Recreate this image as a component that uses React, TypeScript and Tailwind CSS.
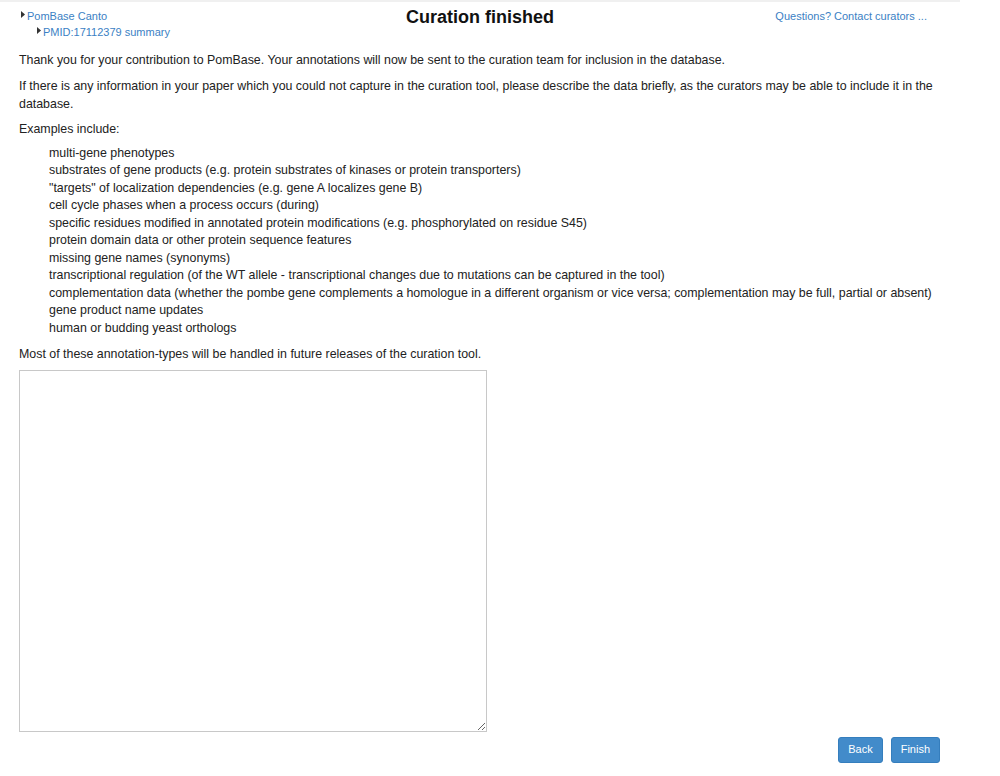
import React from "react";

const examples = [
  "multi-gene phenotypes",
  "substrates of gene products (e.g. protein substrates of kinases or protein transporters)",
  "\"targets\" of localization dependencies (e.g. gene A localizes gene B)",
  "cell cycle phases when a process occurs (during)",
  "specific residues modified in annotated protein modifications (e.g. phosphorylated on residue S45)",
  "protein domain data or other protein sequence features",
  "missing gene names (synonyms)",
  "transcriptional regulation (of the WT allele - transcriptional changes due to mutations can be captured in the tool)",
  "complementation data (whether the pombe gene complements a homologue in a different organism or vice versa; complementation may be full, partial or absent)",
  "gene product name updates",
  "human or budding yeast orthologs",
];

const Caret = () => (
  <svg width="4" height="7" viewBox="0 0 4 7" className="mr-[2px] mt-[-4px] shrink-0">
    <path d="M0 0 L4 3.5 L0 7 Z" fill="#333" />
  </svg>
);

const Header = () => {
  return (
    <div className="relative w-[960px] h-[40px] border-t-[2px] border-[#f0f0f0]">
      <div className="flex flex-col pt-[6px] pl-[21px] text-[11px] leading-[16px] text-[#3b7fc4]">
        <div className="flex items-center">
          <Caret />
          <a href="#">PomBase Canto</a>
        </div>
        <div className="flex items-center pl-[16px]">
          <Caret />
          <a href="#">PMID:17112379 summary</a>
        </div>
      </div>
      <h1 className="absolute left-0 right-0 top-[3px] text-center text-[18px] leading-[24px] font-bold text-[#111]">
        Curation finished
      </h1>
      <a href="#" className="absolute right-[33px] top-[6px] text-[11px] leading-[16px] text-[#3b7fc4]">
        Questions? Contact curators ...
      </a>
    </div>
  );
};

export default function App() {
  return (
    <div className="w-[1000px] h-[776px] bg-white text-[#222] font-['Liberation_Sans',Arial,sans-serif] text-[12.4px] leading-[17.5px]">
      <Header />
      <div className="w-[960px] pl-[19px] pr-[20px] pt-[12px]">
        <p className="mb-[8.5px]">
          Thank you for your contribution to PomBase. Your annotations will now be sent to the curation team for inclusion in the database.
        </p>
        <p className="mb-[7.5px]">
          If there is any information in your paper which you could not capture in the curation tool, please describe the data briefly, as the curators may be able to include it in the database.
        </p>
        <p className="mb-[6.5px]">Examples include:</p>
        <ul className="pl-[30px] mb-[8.5px]">
          {examples.map((e) => (
            <li key={e}>{e}</li>
          ))}
        </ul>
        <p>Most of these annotation-types will be handled in future releases of the curation tool.</p>
        <textarea className="block mt-[7px] w-[468px] h-[362px] border border-[#c8c8c8] outline-none resize" />
        <div className="flex justify-end gap-[8px] mt-[5px]">
          <button className="h-[26px] px-[9px] rounded-[3px] bg-[#428bca] border border-[#357ebd] text-white text-[11px]">
            Back
          </button>
          <button className="h-[26px] px-[9px] rounded-[3px] bg-[#428bca] border border-[#357ebd] text-white text-[11px]">
            Finish
          </button>
        </div>
      </div>
    </div>
  );
}
